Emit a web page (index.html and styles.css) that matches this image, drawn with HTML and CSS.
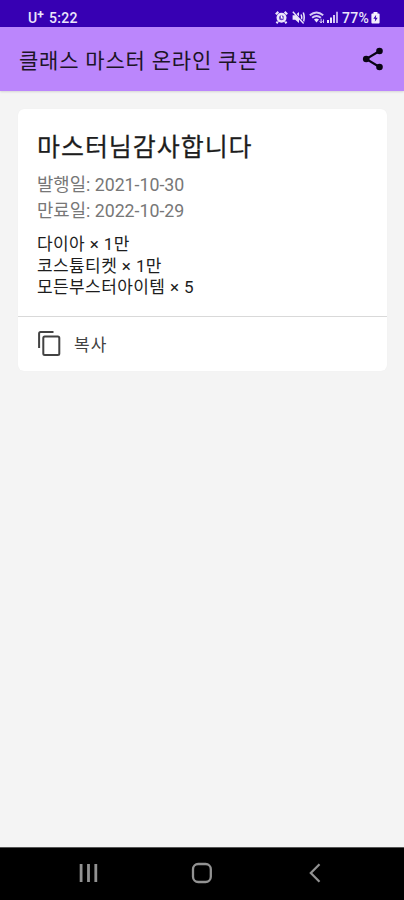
FILE: index.html
```html
<!DOCTYPE html>
<html lang="ko">
<head>
<meta charset="utf-8">
<title>클래스 마스터 온라인 쿠폰</title>
<link rel="stylesheet" href="styles.css">
</head>
<body>
<div class="status">
  <div class="status-left"><span class="carrier">U<sup>+</sup></span><span class="time">5:22</span></div>
  <div class="status-right">
    <svg class="alarm" width="13" height="13" viewBox="0 0 13 13"><circle cx="6.5" cy="6.8" r="5" fill="#ece6fb"/><path d="M.8 3.2 3.4.9M12.2 3.2 9.6.9M2.8 10.8 1.5 12.2M10.2 10.8l1.3 1.4" stroke="#ece6fb" stroke-width="2.2"/><circle cx="6.5" cy="6.8" r="2.5" fill="#6a45c8"/><path d="M6.5 4.6v2.4H8.4" fill="none" stroke="#fff" stroke-width="1.2"/></svg>
    <svg class="mute" width="13" height="13" viewBox="0 0 13 13"><path d="M.6 4.3h2.6L7 1v11L3.2 8.8H.6z" fill="#ece6fb"/><path d="M9 3.5q1.5 3 0 6M11.3 1.6q1.8 5 0 9.8" fill="none" stroke="#ece6fb" stroke-width="1.5"/><path d="M1.6.8 12 12" stroke="#3700b3" stroke-width="1.6"/><path d="M.8.8 11.6 12.4" stroke="#ece6fb" stroke-width="1.4"/></svg>
    <svg class="wifi" width="16" height="13" viewBox="0 0 16 13"><path d="M.8 4.2Q7.5-1.4 14.2 4.2M3.1 6.8Q7.5 3 11.9 6.8" fill="none" stroke="#d8cbf5" stroke-width="1.9"/><path d="m5 8.4 2.5 3 2.5-3q-2.5-1.9-5 0z" fill="#ece6fb"/><path d="M12.1 7.8v4M10.7 10.2l1.4 1.8 1.3-1.8M14.5 12V8.4" fill="none" stroke="#d8cbf5"/></svg>
    <svg class="signal" width="11" height="12" viewBox="0 0 11 12"><path d="M1 12V9M4 12V6.5" stroke="#ece6fb" stroke-width="2"/><path d="M7 12V4" stroke="#d3c5f3" stroke-width="2"/><path d="M10 12V.8" stroke="#b9a4eb" stroke-width="2"/></svg>
    <span class="percent">77%</span>
    <svg class="battery" width="9" height="12" viewBox="0 0 9 12"><path d="M2.5 0h4v1.4h1.2q.9 0 .9.9v8.3q0 .9-.9.9H1.3q-.9 0-.9-.9V2.3q0-.9.9-.9h1.2z" fill="#f4f0fd"/><path d="M5.2 2.8 2.3 6.8h1.9l-.4 3 2.9-4.1H4.8z" fill="#3700b3"/></svg>
  </div>
</div>
<header class="appbar">
  <h1>클래스 마스터 온라인 쿠폰</h1>
  <svg class="share" width="22" height="24" viewBox="0 0 22 24"><path d="M17.5 4 4.2 12l13.3 8" fill="none" stroke="#090413" stroke-width="2.1"/><circle cx="17.5" cy="4" r="3.3" fill="#090413"/><circle cx="4.2" cy="12" r="3.3" fill="#090413"/><circle cx="17.5" cy="20" r="3.3" fill="#090413"/></svg>
</header>
<main>
  <section class="card">
    <div class="content">
      <h2>마스터님감사합니다</h2>
      <div class="dates"><p>발행일: 2021-10-30</p><p>만료일: 2022-10-29</p></div>
      <div class="items"><p>다이아 × 1만</p><p>코스튬티켓 × 1만</p><p>모든부스터아이템 × 5</p></div>
    </div>
    <div class="copy">
      <svg width="24" height="26" viewBox="0 0 24 26" fill="none" stroke="#424242" stroke-width="2"><path d="M2.1 18V3.4q0-1.5 1.5-1.5H16.5"/><rect x="6.3" y="6.5" width="16" height="18.4" rx="1.5"/></svg>
      <span>복사</span>
    </div>
  </section>
</main>
<nav>
  <svg width="20" height="20" viewBox="0 0 20 20"><path d="M2.1 1v18M9.5 1v18M16.8 1v18" stroke="#929292" stroke-width="2.8"/></svg>
  <svg class="home" width="22" height="22" viewBox="0 0 22 22"><rect x="2" y="2" width="17.8" height="18" rx="5.2" fill="none" stroke="#929292" stroke-width="2.3"/></svg>
  <svg width="12" height="20" viewBox="0 0 12 20"><path d="M10.5 1.2 1.8 10l8.7 8.8" fill="none" stroke="#929292" stroke-width="2.2"/></svg>
</nav>
</body>
</html>
```
FILE: styles.css
```css
* { box-sizing: border-box; }
body {
  margin: 0;
  height: 900px;
  display: flex;
  flex-direction: column;
  background: #f4f4f4;
  font-family: Roboto, "Noto Sans CJK KR", sans-serif;
  overflow: hidden;
}
h1, h2, p { margin: 0; font-weight: 400; white-space: nowrap; }
svg { display: block; flex: none; }

.status {
  height: 27px;
  flex: none;
  background: #3700b3;
  color: #ece6fb;
  display: flex;
  justify-content: space-between;
  padding: 9px 24px 0 28px;
  font-size: 14px;
  line-height: 18px;
}
.status-left, .status-right { display: flex; height: 18px; }
.carrier { width: 21px; font-size: 14px; font-weight: 500; }
.carrier sup { font-size: 12px; font-weight: 700; line-height: 0; vertical-align: 4px; }
.time { letter-spacing: 0.3px; font-weight: 500; }
.alarm { margin: 2px 4px 0 0; }
.mute { margin: 2px 4px 0 0; }
.wifi { margin: 2px 2px 0 0; }
.signal { margin: 2px 4px 0 0; }
.percent { width: 29px; font-size: 14px; font-weight: 500; letter-spacing: 0.3px; }
.battery { margin-top: 3px; }

.appbar {
  height: 64px;
  flex: none;
  background: #bb86fc;
  display: flex;
  align-items: center;
  justify-content: space-between;
  padding: 0 20px 0 19px;
  box-shadow: 0 1px 2px rgba(0, 0, 0, 0.12);
}
.appbar h1 { padding-top: 4px; font-size: 21px; line-height: 30px; letter-spacing: 0.8px; color: #1c1426; }

main { flex: 1; padding: 18px 17px 0 18px; }
.card {
  height: 262px;
  background: #fff;
  border-radius: 6px;
  box-shadow: 0 0 1px rgba(0, 0, 0, 0.06);
}
.content { height: 208px; padding: 21px 19px 0; border-bottom: 1px solid #d9d9d9; }
h2 { font-size: 25px; line-height: 36px; letter-spacing: 0.95px; color: #1d1d1d; -webkit-text-stroke: 0.25px #1d1d1d; }
.dates { margin-top: 6px; font-size: 17.75px; line-height: 26px; color: #777; }
.items { margin-top: 10px; font-size: 17px; line-height: 21.5px; letter-spacing: 0.4px; color: #1d1d1d; }
.copy {
  height: 52px;
  padding-left: 19px;
  display: flex;
  align-items: center;
  gap: 13px;
  font-size: 17px;
  letter-spacing: 1px;
  color: #424242;
}

nav {
  height: 53px;
  flex: none;
  background: #000;
  border-top: 1px solid #555;
  display: flex;
  align-items: center;
  justify-content: space-between;
  padding: 0 83px 3px 79px;
}
.home { margin-right: 4px; }
```
